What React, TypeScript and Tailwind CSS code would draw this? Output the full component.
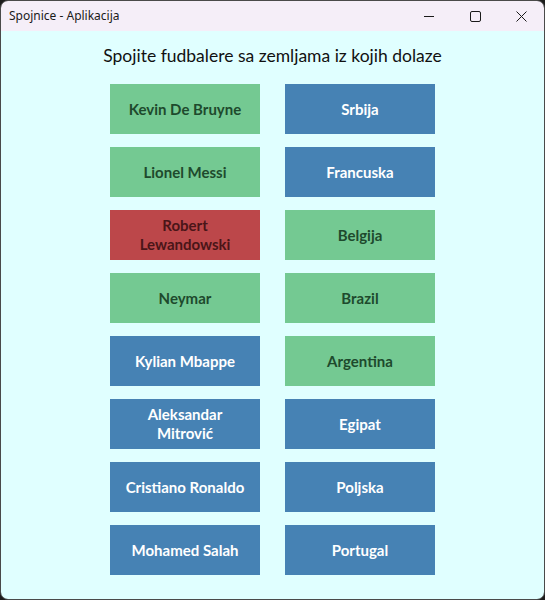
import React from "react";

type Cell = { text: string; kind: "blue" | "green" | "red" };

const rows: [Cell, Cell][] = [
  [{ text: "Kevin De Bruyne", kind: "green" }, { text: "Srbija", kind: "blue" }],
  [{ text: "Lionel Messi", kind: "green" }, { text: "Francuska", kind: "blue" }],
  [{ text: "Robert Lewandowski", kind: "red" }, { text: "Belgija", kind: "green" }],
  [{ text: "Neymar", kind: "green" }, { text: "Brazil", kind: "green" }],
  [{ text: "Kylian Mbappe", kind: "blue" }, { text: "Argentina", kind: "green" }],
  [{ text: "Aleksandar Mitrović", kind: "blue" }, { text: "Egipat", kind: "blue" }],
  [{ text: "Cristiano Ronaldo", kind: "blue" }, { text: "Poljska", kind: "blue" }],
  [{ text: "Mohamed Salah", kind: "blue" }, { text: "Portugal", kind: "blue" }],
];

const kindClass: Record<Cell["kind"], string> = {
  blue: "bg-[#4682b4] text-white",
  green: "bg-[#74c992] text-[#1e4a2d]",
  red: "bg-[#bc474a] text-[#4a1518]",
};

function Btn({ cell }: { cell: Cell }) {
  return (
    <div
      className={`h-[50px] w-[150px] flex items-center justify-center text-center px-3 text-[15px] font-bold leading-[19px] ${kindClass[cell.kind]}`}
    >
      {cell.text}
    </div>
  );
}

export default function App() {
  return (
    <div className="w-[545px] h-[600px] bg-[#1c1c1c]">
      <div
        className="w-[545px] h-[600px] rounded-[8px] overflow-hidden border border-[#4a4a4a] flex flex-col"
        style={{ fontFamily: "Lato, 'Noto Sans', sans-serif" }}
      >
        <div className="h-[30px] shrink-0 bg-[#f5eef8] flex items-center">
          <div
            className="pl-[8px] text-[12px] text-[#1a1a1a] flex-1"
            style={{ fontFamily: "'Noto Sans', 'Open Sans', sans-serif" }}
          >
            Spojnice - Aplikacija
          </div>
          <div className="flex items-center h-full">
            <div className="w-[46px] h-full flex items-center justify-center">
              <svg width="10" height="10" viewBox="0 0 10 10">
                <line x1="0" y1="5.5" x2="10" y2="5.5" stroke="#1a1a1a" strokeWidth="1" />
              </svg>
            </div>
            <div className="w-[46px] h-full flex items-center justify-center">
              <svg width="11" height="11" viewBox="0 0 11 11">
                <rect x="0.5" y="0.5" width="10" height="10" rx="1.5" fill="none" stroke="#1a1a1a" strokeWidth="1" />
              </svg>
            </div>
            <div className="w-[46px] h-full flex items-center justify-center">
              <svg width="11" height="11" viewBox="0 0 11 11">
                <path d="M0.5 0.5 L10.5 10.5 M10.5 0.5 L0.5 10.5" stroke="#1a1a1a" strokeWidth="1" />
              </svg>
            </div>
          </div>
        </div>
        <div className="flex-1 bg-[#e0ffff] flex flex-col items-center">
          <div className="mt-[13px] text-[17.5px] text-[#111] leading-[24px]">
            Spojite fudbalere sa zemljama iz kojih dolaze
          </div>
          <div className="mt-[16px] grid grid-cols-[150px_150px] gap-x-[25px] gap-y-[13px]">
            {rows.map(([a, b], i) => (
              <React.Fragment key={i}>
                <Btn cell={a} />
                <Btn cell={b} />
              </React.Fragment>
            ))}
          </div>
        </div>
      </div>
    </div>
  );
}
